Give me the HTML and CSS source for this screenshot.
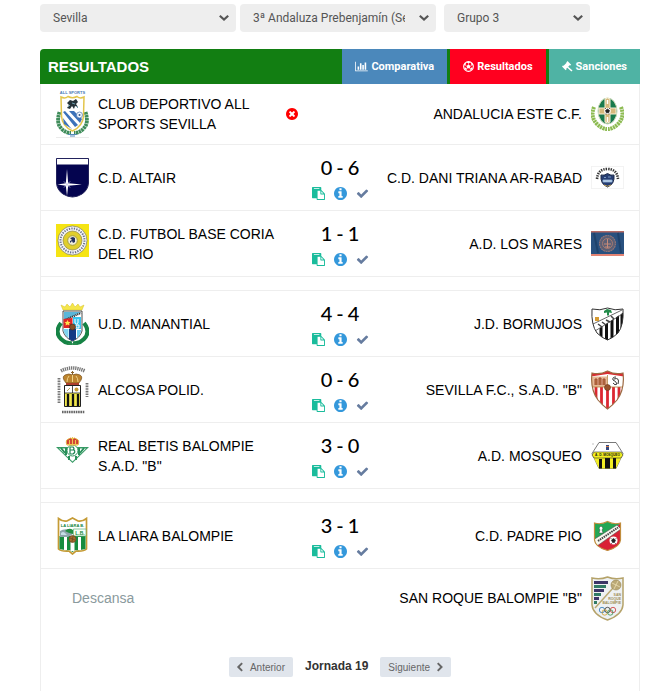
FILE: index.html
```html
<!DOCTYPE html>
<html lang="es">
<head>
    <meta charset="UTF-8">
    <meta name="viewport" content="width=device-width, initial-scale=1.0">
    <link rel="stylesheet" href="styles.css">
    <title>Resultados - Jornada 19</title>
</head>
<body>
    <!-- Shared icons -->
    <svg class="sprite" aria-hidden="true">
        <symbol id="i-down" viewBox="0 0 12 8"><path d="M1.8 1.8 L6 5.6 L10.2 1.8" fill="none" stroke="currentColor" stroke-width="2.2"/></symbol>
        <symbol id="i-chart" viewBox="0 0 2048 1792"><path d="M640 896v512h-256v-512h256zm384-512v1024h-256v-1024h256zm1024 1152v128h-2048v-1536h128v1408h1920zm-640-896v768h-256v-768h256zm384-384v1152h-256v-1152h256z"/></symbol>
        <symbol id="i-ball" viewBox="0 0 24 24">
            <circle cx="12" cy="12" r="10.6" fill="none" stroke="currentColor" stroke-width="2.4"/>
            <path d="M12 7.5l4.400 3.200-1.700 5.100h-5.400l-1.700-5.100zM7 2.500l5 2.500 5-2.500-5-1.500zM1.500 9l4-.5 1.500-4.500-4 2zM22.500 9l-4-.5-1.500-4.500 4 2zM4 18.500l4.500.5-1-4-4-1.500zM20 18.500l-4.500.5 1-4 4-1.500z"/>
            <path d="M12 8V4M8 11l-4-2M16 11l4-2M9.500 15.500L7 19M14.500 15.500L17 19" stroke="currentColor" stroke-width="1.200"/>
        </symbol>
        <symbol id="i-gavel" viewBox="0 0 24 24"><path d="M12 0l8 8-2 2-1.500-.5-3 3L23 20.500 20.500 23 11.500 14.500l-2 2L10 18l-2 2-8-8 2-2 1.500.5 6-6L9.500 3z"/></symbol>
        <symbol id="i-paste" viewBox="0 0 1792 1792"><path d="M768 1664h896v-640h-416q-40 0-68-28t-28-68v-416h-384v1152zm256-1440v-64q0-13-9.500-22.500t-22.500-9.500h-704q-13 0-22.500 9.500t-9.500 22.500v64q0 13 9.500 22.500t22.500 9.500h704q13 0 22.500-9.500t9.500-22.500zm256 672h299l-299-299v299zm512 128v672q0 40-28 68t-68 28h-960q-40 0-68-28t-28-68v-160h-544q-40 0-68-28t-28-68v-1344q0-40 28-68t68-28h1088q40 0 68 28t28 68v328q21 13 36 28l408 408q28 28 48 76t20 88z"/></symbol>
        <symbol id="i-info" viewBox="128 128 1536 1536"><path d="M1152 1376v-160q0-14-9-23t-23-9h-96v-512q0-14-9-23t-23-9h-320q-14 0-23 9t-9 23v160q0 14 9 23t23 9h96v320h-96q-14 0-23 9t-9 23v160q0 14 9 23t23 9h448q14 0 23-9t9-23zm-128-896v-160q0-14-9-23t-23-9h-192q-14 0-23 9t-9 23v160q0 14 9 23t23 9h192q14 0 23-9t9-23zm640 416q0 209-103 385.500t-279.500 279.500-385.500 103-385.500-103-279.500-279.500-103-385.500 103-385.500 279.500-279.500 385.500-103 385.500 103 279.500 279.500 103 385.500z"/></symbol>
        <symbol id="i-check" viewBox="0 0 1792 1792"><path d="M1671 566q0 40-28 68l-724 724-136 136q-28 28-68 28t-68-28l-136-136-362-362q-28-28-28-68t28-68l136-136q28-28 68-28t68 28l294 295 656-657q28-28 68-28t68 28l136 136q28 28 28 68z"/></symbol>
        <symbol id="i-times" viewBox="128 128 1536 1536"><path d="M1277 1122q0-26-19-45l-181-181 181-181q19-19 19-45 0-27-19-46l-90-90q-19-19-46-19-26 0-45 19l-181 181-181-181q-19-19-45-19-27 0-46 19l-90 90q-19 19-19 46 0 26 19 45l181 181-181 181q-19 19-19 45 0 27 19 46l90 90q19 19 46 19 26 0 45-19l181-181 181 181q19 19 45 19 27 0 46-19l90-90q19-19 19-46zm387-226q0 209-103 385.500t-279.500 279.500-385.500 103-385.500-103-279.500-279.500-103-385.500 103-385.500 279.500-279.500 385.500-103 385.500 103 279.500 279.500 103 385.500z"/></symbol>
        <symbol id="i-left" viewBox="400 0 1100 1664"><path d="M1427 301l-531 531 531 531q19 19 19 45t-19 45l-166 166q-19 19-45 19t-45-19l-742-742q-19-19-19-45t19-45l742-742q19-19 45-19t45 19l166 166q19 19 19 45t-19 45z"/></symbol>
        <symbol id="i-right" viewBox="320 0 1100 1664"><path d="M1363 877l-742 742q-19 19-45 19t-45-19l-166-166q-19-19-19-45t19-45l531-531-531-531q-19-19-19-45t19-45l166-166q19-19 45-19t45 19l742 742q19 19 19 45t-19 45z"/></symbol>
    </svg>

    <form class="filters">
        <div class="filter">
            <select aria-label="Provincia"><option>Sevilla</option></select>
            <svg class="arrow"><use href="#i-down"/></svg>
        </div>
        <div class="filter">
            <select aria-label="Categoría"><option>3ª Andaluza Prebenjamín (Sevilla)</option></select>
            <svg class="arrow"><use href="#i-down"/></svg>
        </div>
        <div class="filter filter-group">
            <select aria-label="Grupo"><option>Grupo 3</option></select>
            <svg class="arrow"><use href="#i-down"/></svg>
        </div>
    </form>

    <main class="panel">
        <header class="panel-header">
            <h1>RESULTADOS</h1>
            <nav class="tabs">
                <a class="tab tab-compare" href="#"><svg class="icon icon-wide"><use href="#i-chart"/></svg>Comparativa</a>
                <a class="tab tab-results" href="#"><svg class="icon"><use href="#i-ball"/></svg>Resultados</a>
                <a class="tab tab-sanctions" href="#"><svg class="icon"><use href="#i-gavel"/></svg>Sanciones</a>
            </nav>
        </header>

        <div class="match match-short">
            <div class="team">
                <svg class="crest" viewBox="0 0 33 48" height="48">
                    <text x="16.500" y="4" font-size="4" text-anchor="middle" fill="#4a7ab5" font-weight="bold">ALL SPORTS</text>
                    <path d="M3.500 22Q0 33 5 38Q9 43 15 43M29.500 22Q33 33 28 38Q24 43 18 43" fill="none" stroke="#3f8c5a" stroke-width="3.800" stroke-dasharray="2.500 .5"/>
                    <path d="M5 7Q9 9 12 6.500Q16.500 9 21 6.500Q24 9 28 7L27.500 26Q27 36 16.500 41Q6 36 5.500 26Z" fill="#fff" stroke="#e3c54a" stroke-width="1.500"/>
                    <path d="M7 22L19 37L22 35L9 21ZM13 21L24 33L26 29L18 21ZM7 28L14 37L16 39L8 34Z" fill="#3c72b9"/>
                    <path d="M11 13l3-3 3 1 3-2 2 3-2 2 2 3-3-1-1 3-2-3-2 3-3-1 2-3z" fill="#26333a"/>
                    <path d="M16 13l3 1M14 15l-2 2M20 16l2 2" stroke="#6b9cac"/>
                    <circle cx="23.500" cy="25" r="3" fill="#f4f8ff" stroke="#4c75aa" stroke-width=".7"/><circle cx="23.500" cy="25" r="1" fill="#36598b"/>
                    <path d="M12 44.500h9M14 46h5" stroke="#548ab7" stroke-width="1.200"/>
                    <path d="M0 47.500h33" stroke="#ddd" stroke-width=".6"/>
                </svg>
                <span class="team-name">CLUB DEPORTIVO ALL SPORTS SEVILLA</span>
                <svg class="retired" role="img" aria-label="Retirado"><use href="#i-times"/></svg>
            </div>
            <div class="result"></div>
            <div class="team team-away">
                <span class="team-name">ANDALUCIA ESTE C.F.</span>
                <svg class="crest" viewBox="0 0 33 35" height="35">
                    <path d="M3 10Q-1 20 6 27Q11 32 16 32M30 10Q34 20 27 27Q22 32 17 32" fill="none" stroke="#8dbb52" stroke-width="4" stroke-dasharray="2.200 .6"/>
                    <ellipse cx="16.500" cy="14" rx="9.500" ry="13" fill="#187a4d" stroke="#c5d7b1"/>
                    <path d="M14 2q2.500-2 5 0v9h6v6h-6v8q-2.500 2-5 0v-8H8v-6h6z" fill="#d5b97c" stroke="#f6eed6" stroke-width="1"/>
                    <circle cx="16.500" cy="14" r="3.300" fill="#fff"/><path d="M16.500 12l2 1.500-.8 2.200h-2.400l-.8-2.200zM14 12l1-1M19 12l-1-1M14.500 17h1M17.500 17h1" fill="#222" stroke="#222" stroke-width=".7"/>
                    <path d="M16.500 3v4M16.500 20v5" stroke="#fff" stroke-width="1.500"/>
                </svg>
            </div>
        </div>

        <div class="match">
            <div class="team">
                <svg class="crest" viewBox="0 0 33 40" height="40">
                    <path d="M.5.5h32V25Q32 32 26 36Q16.500 42 7 36Q1 32 .5 25Z" fill="#04044f" stroke="#22225c"/>
                    <path d="M1 1h31v5.500H1z" fill="#fff"/>
                    <path d="M11 11L12.200 25.200L26 26.500L12.200 27.800L11 38L9.800 27.800L1.500 26.500L9.800 25.200Z" fill="#fff"/>
                    <path d="M8 23.500l6 6M14 23.500l-6 6" stroke="#bbbbe0" stroke-width=".8"/>
                </svg>
                <span class="team-name">C.D. ALTAIR</span>
            </div>
            <div class="result">
                <div class="score"><span>0</span><span>-</span><span>6</span></div>
                <div class="actions"><a class="act-report" href="#" aria-label="Acta"><svg><use href="#i-paste"/></svg></a><a class="act-info" href="#" aria-label="Información"><svg><use href="#i-info"/></svg></a><a class="act-done" href="#" aria-label="Confirmado"><svg><use href="#i-check"/></svg></a></div>
            </div>
            <div class="team team-away">
                <span class="team-name">C.D. DANI TRIANA AR-RABAD</span>
                <svg class="crest" viewBox="0 0 33 23" height="23">
                    <path d="M.3.3h32.400v22.400H.3z" fill="#fff" stroke="#e5e5e5" stroke-width=".6"/>
                    <path d="M6 13Q7 3 16.500 3Q26 3 27 13" fill="none" stroke="#333" stroke-width="2.600" stroke-dasharray="1.400 1"/>
                    <path d="M10 9q3 1 6.500-1.500q3.500 2.500 6.500 1.500q1 9-6.500 12q-7.500-3-6.500-12z" fill="#263e74" stroke="#1c2947"/>
                    <path d="M12 14h9v2h-9zM13 11.500h2M17 11h3" fill="#c2d8ef" stroke="#8fb0d4" stroke-width=".8"/>
                    <path d="M13 19q3.500 2.500 7 0" fill="none" stroke="#c6a65b"/>
                </svg>
            </div>
        </div>

        <div class="match">
            <div class="team">
                <svg class="crest crest-top" viewBox="0 0 33 33" height="33">
                    <path d="M0 0h33v33H0z" fill="#f5e413"/>
                    <circle cx="16.500" cy="16.500" r="14.500" fill="#f8f8f4" stroke="#77765e" stroke-width=".7"/>
                    <circle cx="16.500" cy="16.500" r="12" fill="none" stroke="#6b7090" stroke-width="2" stroke-dasharray="1.300 1.200"/>
                    <circle cx="16.500" cy="16.500" r="9.500" fill="#e0ce2b" stroke="#7b7440" stroke-width=".6"/>
                    <circle cx="16.500" cy="16.500" r="4.800" fill="#f1eedb" stroke="#a49d3a"/>
                    <path d="M14 14l3-1 2 1v4l-2 1-1-2-2 2v-2l2-1z" fill="#26325e"/>
                </svg>
                <span class="team-name">C.D. FUTBOL BASE CORIA DEL RIO</span>
            </div>
            <div class="result">
                <div class="score"><span>1</span><span>-</span><span>1</span></div>
                <div class="actions"><a class="act-report" href="#" aria-label="Acta"><svg><use href="#i-paste"/></svg></a><a class="act-info" href="#" aria-label="Información"><svg><use href="#i-info"/></svg></a><a class="act-done" href="#" aria-label="Confirmado"><svg><use href="#i-check"/></svg></a></div>
            </div>
            <div class="team team-away">
                <span class="team-name">A.D. LOS MARES</span>
                <svg class="crest" viewBox="0 0 33 25" height="25">
                    <path d="M0 0h33v25H0z" fill="#29517f"/>
                    <path d="M0 .7h33" stroke="#b56a64" stroke-width="1.400"/><path d="M0 24h33" stroke="#e38373" stroke-width="2"/>
                    <path d="M3 2l4 20M27 2l3 20" stroke="#1f426b" stroke-width="2"/>
                    <circle cx="16.500" cy="12.500" r="8" fill="#5b5f74" stroke="#8f7377" stroke-width="1.200" stroke-dasharray="2 .5"/>
                    <circle cx="16.500" cy="12.500" r="5" fill="none" stroke="#a67a72"/><path d="M16.500 8v9M13 13h7M14 16h5" stroke="#c68a78"/>
                </svg>
            </div>
        </div>

        <div class="divider"></div>

        <div class="match">
            <div class="team">
                <svg class="crest" viewBox="0 0 33 42" height="42">
                    <path d="M5 20Q-2 29 5 36Q10 41 16 40M28 20Q35 29 28 36Q23 41 17 40" fill="none" stroke="#168345" stroke-width="4"/>
                    <path d="M7 7L5 2l4 2 2-3 3 3 2.500-4L19 4l3-3 2 3 4-2-2 5z" fill="#f5e64a" stroke="#d6c128" stroke-width=".5"/>
                    <path d="M7 8h19v20q-2 7-9.500 10Q9 35 7 28z" fill="#fff" stroke="#222" stroke-width=".8"/>
                    <path d="M8 9h17L8 18z" fill="#5ab6d9"/><path d="M9 17l16-7" stroke="#333" stroke-width="2" stroke-dasharray="1.200 .7"/>
                    <path d="M7.500 16l9-1v10h-9z" fill="#df2526"/><path d="M11.500 17l1 2h2l-1.500 1.500.5 2-2-1-2 1 .5-2L8.500 19h2z" fill="#ffe24b"/>
                    <path d="M17 14h8v12h-8z" fill="#3ac4ee"/><path d="M19 16v4q1.500 2 3 0v-4M20 22h3v3h-3z" fill="none" stroke="#fff"/>
                    <path d="M7.500 26h5v9q-4-3-5-7z" fill="#7ed3ef"/><path d="M13 26h7v10l-3.500 2-3.500-2z" fill="#123984"/><path d="M21 27h4.500q-1 5-4.500 8z" fill="#6ccbf0"/>
                    <circle cx="16.500" cy="24" r="3" fill="#855025" stroke="#3c291c" stroke-width=".6"/>
                    <path d="M12 41h9" stroke="#2c8c51" stroke-width="1.500"/>
                </svg>
                <span class="team-name">U.D. MANANTIAL</span>
            </div>
            <div class="result">
                <div class="score"><span>4</span><span>-</span><span>4</span></div>
                <div class="actions"><a class="act-report" href="#" aria-label="Acta"><svg><use href="#i-paste"/></svg></a><a class="act-info" href="#" aria-label="Información"><svg><use href="#i-info"/></svg></a><a class="act-done" href="#" aria-label="Confirmado"><svg><use href="#i-check"/></svg></a></div>
            </div>
            <div class="team team-away">
                <span class="team-name">J.D. BORMUJOS</span>
                <svg class="crest" viewBox="0 0 33 34" height="34">
                    <clipPath id="bor"><path d="M1 2Q9 4 16.500 1Q24 4 32 2Q33 18 27 26Q22 31 16.500 33Q11 31 6 26Q0 18 1 2Z"/></clipPath>
                    <g clip-path="url(#bor)">
                        <path d="M0 0h33v34H0z" fill="#fff"/>
                        <path d="M10 18v16M15.500 14v20M21 10v24M26.500 7v27M31 5v22" stroke="#111" stroke-width="3"/>
                        <path d="M0 18L30 2L33 5L3 25z" fill="#fff"/>
                        <path d="M2 17L31 3M4 24L33 6" stroke="#444" stroke-width=".8"/>
                        <path d="M7 17l4 3M11 15l4 3M15 13l4 2M20 9l3 3" stroke="#444" stroke-width="1.500"/>
                    </g>
                    <path d="M1 2Q9 4 16.500 1Q24 4 32 2Q33 18 27 26Q22 31 16.500 33Q11 31 6 26Q0 18 1 2Z" fill="none" stroke="#333"/>
                    <path d="M13 4l3-2 4 1 1 3-3-.5v3h-2v-3l-3 .5z" fill="#238b4a"/><path d="M4 10h4v4H4z" fill="#d69b32"/>
                </svg>
            </div>
        </div>

        <div class="match">
            <div class="team">
                <svg class="crest" viewBox="0 0 33 50" height="50">
                    <path d="M5 6Q16 0 29 6" fill="none" stroke="#777" stroke-width="3.600" stroke-dasharray="1.300 .8"/>
                    <path d="M3 13v25M31 18v14" stroke="#777" stroke-width="2.800" stroke-dasharray="1.600 1"/>
                    <path d="M6 47h23" stroke="#666" stroke-width="2.600" stroke-dasharray="1.600 .7"/>
                    <path d="M10 18Q5 12 9 10Q13 8 16.500 10Q20 8 24 10Q28 12 23 18Z" fill="#bd842d" stroke="#79501e" stroke-width=".7"/>
                    <path d="M11 17q0-4 2-6M16.500 17v-7M22 17q0-4-2-6" stroke="#f1d387" fill="none"/><path d="M16.500 6v4M15 7.500h3" stroke="#8b632b"/>
                    <path d="M10 18h13v2H10z" fill="#ad3f2c"/>
                    <path d="M8.500 20.500h16v21h-16z" fill="#f2e84c" stroke="#222"/>
                    <path d="M9 21h15v7H9z" fill="#fff"/><path d="M16.500 21v7M9 28h15" stroke="#222" stroke-width=".8"/>
                    <path d="M12 29v12M17 29v12M22 29v12" stroke="#111" stroke-width="2.300"/>
                    <circle cx="20.500" cy="24.500" r="2" fill="#c59a36"/><path d="M11 26l3-3" stroke="#baa260"/>
                </svg>
                <span class="team-name">ALCOSA POLID.</span>
            </div>
            <div class="result">
                <div class="score"><span>0</span><span>-</span><span>6</span></div>
                <div class="actions"><a class="act-report" href="#" aria-label="Acta"><svg><use href="#i-paste"/></svg></a><a class="act-info" href="#" aria-label="Información"><svg><use href="#i-info"/></svg></a><a class="act-done" href="#" aria-label="Confirmado"><svg><use href="#i-check"/></svg></a></div>
            </div>
            <div class="team team-away">
                <span class="team-name">SEVILLA F.C., S.A.D. "B"</span>
                <svg class="crest" viewBox="0 0 33 40" height="40">
                    <clipPath id="sev"><path d="M1 3Q9 5 16.500 1Q24 5 32 3Q34 19 26 30Q22 35 16.500 39Q11 35 7 30Q-1 19 1 3Z"/></clipPath>
                    <g clip-path="url(#sev)">
                        <path d="M0 0h33v40H0z" fill="#fff"/>
                        <path d="M0 0h33v6.500L16.500 4 0 6.500z" fill="#d92c32"/>
                        <path d="M5 17v23M10.500 17v23M16.500 17v23M22.500 17v23M28 17v23" stroke="#dc2731" stroke-width="2.800"/>
                        <path d="M0 6.500h16v10.500H0z" fill="#e6b995"/>
                        <path d="M4 15V9h2v6M8 15V8h2v7M12 15V9h2v6" fill="#b47a42" stroke="#a34b35" stroke-width="1"/>
                    </g>
                    <path d="M16.500 5v12M2 17h29" stroke="#b48443" stroke-width=".8"/>
                    <path d="M25 7q-4 0-3 3q3 1 4 4q-2 2-4-1M23 9q6-2 4 5" fill="none" stroke="#333"/>
                    <circle cx="16.500" cy="17.500" r="3" fill="#99532b" stroke="#683319" stroke-width=".6"/>
                    <path d="M1 3Q9 5 16.500 1Q24 5 32 3Q34 19 26 30Q22 35 16.500 39Q11 35 7 30Q-1 19 1 3Z" fill="none" stroke="#9d6a43" stroke-width="1.200"/>
                </svg>
            </div>
        </div>

        <div class="match">
            <div class="team">
                <svg class="crest crest-top" viewBox="0 0 33 27" height="27">
                    <path d="M0 11h33L16.500 27z" fill="#379a65"/><path d="M3 12.500h27L16.500 25.500z" fill="#fff"/>
                    <path d="M5 12l4 5M10 12v7M23 12v7M28 12l-4 5M13 20v4M20 20v4" stroke="#279059" stroke-width="2"/>
                    <circle cx="16.500" cy="14.500" r="5.500" fill="#fff" stroke="#2e965e" stroke-width="1"/>
                    <path d="M14 11v7M14 11h3q2 2 0 3h-3h4q2 2-1 4h-3" fill="none" stroke="#1b8550" stroke-width="1.200"/>
                    <path d="M11 9Q9 4 12.500 3Q14.500 1 16.500 3Q18.500 1 20.500 3Q24 4 22 9Z" fill="#ce3a31" stroke="#e2b445" stroke-width="1"/>
                    <path d="M13.500 8V4M16.500 8V1M19.500 8V4M11 8.500h11" stroke="#efc552" stroke-width="1.200"/>
                </svg>
                <span class="team-name">REAL BETIS BALOMPIE S.A.D. "B"</span>
            </div>
            <div class="result">
                <div class="score"><span>3</span><span>-</span><span>0</span></div>
                <div class="actions"><a class="act-report" href="#" aria-label="Acta"><svg><use href="#i-paste"/></svg></a><a class="act-info" href="#" aria-label="Información"><svg><use href="#i-info"/></svg></a><a class="act-done" href="#" aria-label="Confirmado"><svg><use href="#i-check"/></svg></a></div>
            </div>
            <div class="team team-away">
                <span class="team-name">A.D. MOSQUEO</span>
                <svg class="crest" viewBox="0 0 33 27" height="27">
                    <path d="M8 .5h17l7 11-7 15H8L1 11.500z" fill="#fff" stroke="#555" stroke-width=".8"/>
                    <path d="M3 16h27l-5 10.500H8z" fill="#f2ee24"/><path d="M8 17h3v9.500H8zM14 16h5v10.500h-5zM22 16h3v10.500h-3z" fill="#111"/>
                    <path d="M3 10h27l2 3-2 3H3l-2-3z" fill="#f4ee20" stroke="#333" stroke-width=".6"/>
                    <text x="16.500" y="14.200" font-size="3.200" font-weight="bold" text-anchor="middle" fill="#111">A. D. MOSQUEO</text>
                    <path d="M15 3h3v5h-3z" fill="#344881"/><path d="M15 4.500h3" stroke="#d77a3f"/><circle cx="2" cy="2" r=".8" fill="#bbb"/>
                </svg>
            </div>
        </div>

        <div class="divider"></div>

        <div class="match">
            <div class="team">
                <svg class="crest" viewBox="0 0 33 38" height="38">
                    <path d="M2.500 1.500Q7 5 11 4L16.500 1L22 4Q26 5 30.500 1.500V32Q28 34.500 20 34L16.500 37L13 34Q5 34.500 2.500 32Z" fill="#fff" stroke="#c59b35" stroke-width="1.700"/>
                    <text x="16.500" y="10" font-size="4" font-weight="bold" text-anchor="middle" fill="#12833b">LA LIARA B.</text>
                    <path d="M3.500 19h26v13q-5 1.500-10 1l-3 2-3-2q-5 .5-10-1z" fill="#168c3e"/>
                    <path d="M8 20v13h3V20zM22 20v13h3V20zM14.500 23v11h4V23z" fill="#fff"/>
                    <path d="M4 14q4-3 11-1l2 4-5 3H4z" fill="#8da5ac"/><path d="M9 14q4-4 8-1v4q-5-1-8-3z" fill="#218e42"/>
                    <path d="M5 16q2-2 4 0l2 2H5z" fill="#c6dde7"/>
                    <path d="M17.500 12H30v7H17.500z" fill="#f5fff7" stroke="#62b079" stroke-width=".7"/><text x="24" y="17.500" font-size="5" font-weight="bold" text-anchor="middle" fill="#1a8942">L.B.</text>
                    <circle cx="16.500" cy="22" r="3.500" fill="#a56b2d" stroke="#694624" stroke-width=".7"/><path d="M14 21l5 2M17 19l-1 6" stroke="#68401e" stroke-width=".6"/>
                </svg>
                <span class="team-name">LA LIARA BALOMPIE</span>
            </div>
            <div class="result">
                <div class="score"><span>3</span><span>-</span><span>1</span></div>
                <div class="actions"><a class="act-report" href="#" aria-label="Acta"><svg><use href="#i-paste"/></svg></a><a class="act-info" href="#" aria-label="Información"><svg><use href="#i-info"/></svg></a><a class="act-done" href="#" aria-label="Confirmado"><svg><use href="#i-check"/></svg></a></div>
            </div>
            <div class="team team-away">
                <span class="team-name">C.D. PADRE PIO</span>
                <svg class="crest" viewBox="0 0 33 32" height="32">
                    <clipPath id="pio"><path d="M3.500 3Q10 5 16.500 1.500Q23 5 29.500 3V20Q29 27 16.500 30.500Q4 27 3.500 20Z"/></clipPath>
                    <g clip-path="url(#pio)"><path d="M0 0h33L0 30z" fill="#23a755"/><path d="M33 0v32H0v-3z" fill="#d92135"/><path d="M2 20L26 5l4 4L6 26z" fill="#f8f8ef" stroke="#555" stroke-width=".6"/></g>
                    <path d="M7 21L27 7.500" stroke="#444" stroke-width="2" stroke-dasharray="1.500 .8"/>
                    <path d="M8 13l1-3-1-2 2-2 2 2-1 2 1 3z" fill="#fff" stroke="#333" stroke-width=".4"/>
                    <circle cx="22.500" cy="20.500" r="4" fill="#fff"/><path d="M22.500 18.500l2 1.500-1 2.500h-2l-1-2.500zM19.500 18l1 1M25.500 18l-1 1M20 23.500h1M24 23.500h1" fill="#222" stroke="#222" stroke-width=".6"/>
                    <path d="M3.500 3Q10 5 16.500 1.500Q23 5 29.500 3V20Q29 27 16.500 30.500Q4 27 3.500 20Z" fill="none" stroke="#c18d3e" stroke-width="1.200"/>
                </svg>
            </div>
        </div>

        <div class="match match-rest">
            <span class="rest">Descansa</span>
            <div class="result"></div>
            <div class="team team-away">
                <span class="team-name">SAN ROQUE BALOMPIE "B"</span>
                <svg class="crest" viewBox="0 0 33 45" height="45">
                    <path d="M1 2Q9 4 16.500 1Q24 4 32 2V29Q31 39 16.500 44Q2 39 1 29Z" fill="#eef1f3" stroke="#b5a36a" stroke-width="1.500"/>
                    <path d="M3 5h14v3H3z" fill="#3c3568"/><path d="M3 9h12v3H3z" fill="#317b66"/><path d="M3 13h10v3H3z" fill="#3c3568"/><path d="M3 17h7v3H3z" fill="#317b66"/><path d="M3 21h5v3H3z" fill="#3c3568"/><path d="M3 25h3v3H3z" fill="#317b66"/>
                    <path d="M22 12L4 32" stroke="#bbaa73" stroke-width="1.500"/>
                    <circle cx="25" cy="9" r="5" fill="#bba976" stroke="#998650" stroke-width=".6"/><path d="M21 7l8 4M27 5l-4 8" stroke="#eee1b5" stroke-width=".8"/>
                    <g font-size="3.500" font-weight="bold" fill="#a08d55" text-anchor="end"><text x="30" y="20">SAN</text><text x="30" y="24">ROQUE</text><text x="30" y="28">BALOMPIE</text></g>
                    <g fill="none" stroke-width=".9"><circle cx="11" cy="34" r="2.700" stroke="#3d84be"/><circle cx="16.500" cy="34" r="2.700" stroke="#444"/><circle cx="22" cy="34" r="2.700" stroke="#cf4c4c"/><circle cx="13.700" cy="36.500" r="2.700" stroke="#d1a53b"/><circle cx="19.300" cy="36.500" r="2.700" stroke="#43985c"/></g>
                </svg>
            </div>
        </div>

        <div class="pager">
            <button type="button"><svg><use href="#i-left"/></svg>Anterior</button>
            <strong>Jornada 19</strong>
            <button type="button">Siguiente<svg><use href="#i-right"/></svg></button>
        </div>
    </main>
</body>
</html>
```
FILE: styles.css
```css
body {
    display: flex;
    flex-direction: column;
    box-sizing: border-box;
    min-height: 100vh;
    margin: 0;
    padding: 4px 8px 0 40px;
    background-color: #fff;
    font-family: "Liberation Sans", Arial, sans-serif;
    font-size: 14px;
    line-height: 20px;
    color: #000;
}
svg {
    display: block;
    flex: none;
    fill: currentColor;
}
.sprite {
    position: absolute;
    width: 0;
    height: 0;
}

/* Filters */
.filters {
    display: flex;
    gap: 4px;
    margin: 0 50px 17px 0;
}
.filter {
    position: relative;
    flex: 98 1 0;
    min-width: 0;
}
.filter-group {
    flex-grow: 73;
    margin-left: 4px;
}
.filter select {
    display: block;
    appearance: none;
    box-sizing: border-box;
    width: 100%;
    height: 28px;
    padding: 0 31px 0 13px;
    border: none;
    border-radius: 4px;
    background-color: #eee;
    color: #555;
    font-family: Roboto, sans-serif;
    font-size: 12px;
}
.filter .arrow {
    position: absolute;
    top: 10px;
    right: 6px;
    width: 12px;
    height: 8px;
    color: #555;
    pointer-events: none;
}

/* Panel */
.panel {
    display: flex;
    flex-direction: column;
    flex: 1;
}
.panel-header {
    display: flex;
    justify-content: space-between;
    align-items: center;
    height: 35px;
    padding-left: 8px;
    border-radius: 4px 0 0 0;
    background-color: #127e12;
    color: #fff;
}
.panel-header h1 {
    margin: 0;
    font-size: 15px;
}
.tabs {
    display: flex;
    gap: 3px;
    height: 100%;
}
.tab {
    display: flex;
    align-items: center;
    gap: 3px;
    padding: 0 13px;
    color: #fff;
    font-family: Roboto, sans-serif;
    font-size: 11px;
    font-weight: bold;
    text-decoration: none;
}
.tab .icon {
    width: 11px;
    height: 11px;
}
.tab .icon-wide {
    width: 13px;
}
.tab-compare {
    background-color: #4b88bb;
}
.tab-results {
    background-color: #ff001f;
}
.tab-sanctions {
    background-color: #4fb3a4;
}

/* Matches */
.match,
.divider,
.pager {
    border: solid #eee;
    border-width: 0 1px 1px;
}
.match {
    display: grid;
    grid-template-columns: 1fr 84px 1fr;
    align-items: center;
    box-sizing: border-box;
    min-height: 66px;
    padding: 0 15px;
}
.match-short {
    min-height: 61px;
}
.match-rest {
    min-height: 58px;
    border-bottom: none;
}
.divider {
    height: 13px;
}
.team {
    display: flex;
    align-items: center;
    gap: 9px;
}
.team-name {
    flex: 1;
    padding-right: 10px;
}
.team-away {
    text-align: right;
}
.team-away .team-name {
    padding-right: 0;
}
.crest {
    width: 33px;
}
.crest-top {
    align-self: flex-start;
}
.retired {
    width: 12px;
    height: 12px;
    color: #f00;
}
.score {
    display: flex;
    justify-content: center;
    gap: 4px;
    font-family: Lato, sans-serif;
    font-size: 20px;
    font-weight: 500;
    line-height: 24px;
}
.actions {
    display: flex;
    justify-content: center;
    gap: 9px;
    padding-top: 8px;
}
.actions svg {
    width: 13px;
    height: 13px;
}
.act-report {
    color: #1abc9c;
}
.act-info {
    color: #3498db;
}
.act-done {
    color: #667c9f;
}
.rest {
    padding-left: 16px;
    color: #8a9a9d;
}

/* Pager */
.pager {
    display: flex;
    flex: 1;
    justify-content: center;
    align-items: flex-start;
    gap: 12px;
    padding: 30px 0 12px;
    border-bottom: none;
}
.pager strong {
    font-size: 12px;
    line-height: 18px;
    color: #333;
}
.pager button {
    display: flex;
    align-items: center;
    gap: 7px;
    height: 20px;
    padding: 0 8px;
    border: none;
    border-radius: 2px;
    background-color: #e0e5ec;
    color: #666;
    font-family: "Liberation Sans", Arial, sans-serif;
    font-size: 10px;
    cursor: pointer;
}
.pager svg {
    width: 6px;
    height: 10px;
}
```
